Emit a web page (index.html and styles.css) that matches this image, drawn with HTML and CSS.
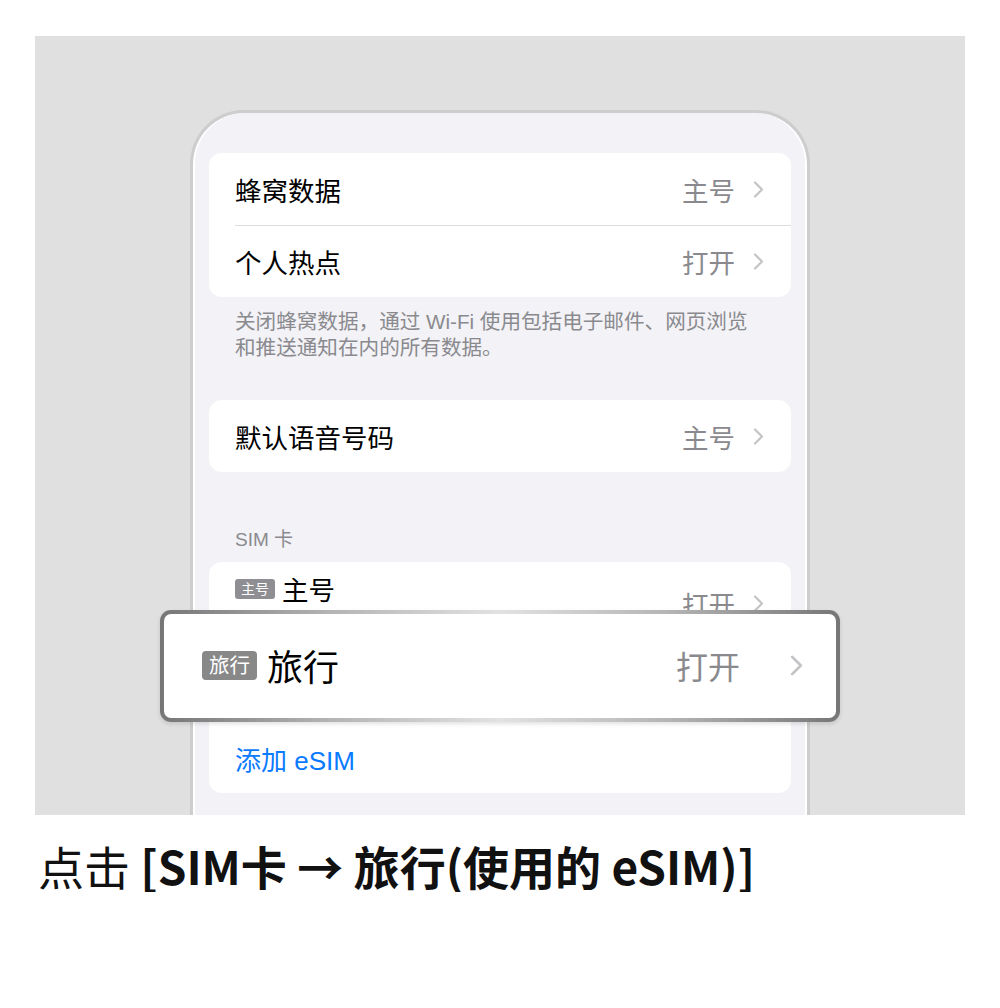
FILE: index.html
```html
<!DOCTYPE html>
<html lang="zh-CN">

<head>
  <meta charset="UTF-8">
  <meta name="viewport" content="width=device-width, initial-scale=1" />
  <title>SIM 卡设置</title>
  <link rel="stylesheet" href="styles.css">
</head>

<body>
  <div class="stage">
    <div class="phone">
      <div class="group">
        <div class="row">
          <span class="label">蜂窝数据</span>
          <span class="value">主号</span>
          <svg class="chevron" viewBox="0 0 10 17"><path d="M1.5 1.5l7 7-7 7" /></svg>
        </div>
        <div class="row">
          <span class="label">个人热点</span>
          <span class="value">打开</span>
          <svg class="chevron" viewBox="0 0 10 17"><path d="M1.5 1.5l7 7-7 7" /></svg>
        </div>
      </div>
      <p class="footnote">关闭蜂窝数据，通过 Wi-Fi 使用包括电子邮件、网页浏览<br>和推送通知在内的所有数据。</p>

      <div class="group group-voice">
        <div class="row">
          <span class="label">默认语音号码</span>
          <span class="value">主号</span>
          <svg class="chevron" viewBox="0 0 10 17"><path d="M1.5 1.5l7 7-7 7" /></svg>
        </div>
      </div>

      <h3 class="section-title">SIM 卡</h3>
      <div class="group">
        <div class="row row-sim">
          <span class="label"><span class="badge">主号</span>主号</span>
          <span class="value">打开</span>
          <svg class="chevron" viewBox="0 0 10 17"><path d="M1.5 1.5l7 7-7 7" /></svg>
        </div>
        <!-- the travel row sits under the callout, so only its box is kept -->
        <div class="row row-sim row-covered"></div>
        <div class="row row-add">
          <span class="link">添加 eSIM</span>
        </div>
      </div>
    </div>

    <!-- enlarged copy of the travel SIM row -->
    <div class="callout">
      <span class="badge">旅行</span>
      <span class="label">旅行</span>
      <span class="value">打开</span>
      <svg class="chevron" viewBox="0 0 10 17"><path d="M1.5 1.5l7 7-7 7" /></svg>
    </div>
  </div>

  <p class="caption">点击 <b>[SIM卡 → 旅行(使用的 eSIM)]</b></p>
</body>

</html>
```

FILE: styles.css
```css
:root {
  --color-text: #000;
  --color-muted: #8a8a8e;
  --color-chevron: #c4c4c7;
  --color-phone-bg: #f2f2f7;
  --color-stage: #e0e0e0;
  --color-link: #0a7aff;
  --font-ui: "Liberation Sans", "Noto Sans CJK SC", sans-serif;
}

* {
  margin: 0;
  padding: 0;
  box-sizing: border-box;
}

body {
  background-color: #fff;
  font-family: var(--font-ui);
  color: var(--color-text);
}

.stage {
  position: relative;
  margin: 36px 35px 0;
  height: 779px;
  padding-top: 74px;
  background-color: var(--color-stage);
  overflow: hidden;

  display: flex;
  justify-content: center;
}

.phone {
  width: 620px;
  height: 720px;
  padding: 40px 16px 0;
  background-color: var(--color-phone-bg);
  border: 3px solid #cdcdcd;
  border-bottom: none;
  border-radius: 54px 54px 0 0;
  box-shadow: inset 2px 0 0 #fff, inset -2px 0 0 #fff;
}

.group {
  background-color: #fff;
  border-radius: 13px;
  overflow: hidden;
}

.row {
  position: relative;
  height: 72px;
  padding: 0 27px 0 26px;

  display: flex;
  align-items: center;

  .label {
    flex: 1;
    font-size: 26.5px;
    display: flex;
    align-items: center;
  }

  .value {
    font-size: 26.5px;
    color: var(--color-muted);
    margin-right: 18px;
  }
}

.row + .row::before {
  content: "";
  position: absolute;
  top: 0;
  left: 26px;
  right: 0;
  border-top: 1px solid #dcdcdf;
}

.chevron {
  width: 11px;
  height: 17px;
  flex-shrink: 0;

  path {
    fill: none;
    stroke: var(--color-chevron);
    stroke-width: 2.2;
    stroke-linecap: round;
    stroke-linejoin: round;
  }
}

.badge {
  margin-right: 7px;
  padding: 0 6px;
  height: 20px;
  line-height: 20px;
  border-radius: 3px;
  background-color: #8e8e93;
  color: #fff;
  font-size: 14px;
}

.row-sim {
  height: 76px;
  padding-top: 7px;

  .label {
    align-self: flex-start;
  }
}

.row-add {
  height: 79px;
  padding-top: 10px;
}

.link {
  font-size: 26px;
  color: var(--color-link);
}

.footnote {
  margin-top: 12px;
  padding-left: 26px;
  font-size: 20.6px;
  line-height: 26px;
  color: var(--color-muted);
}

.group-voice {
  margin-top: 39px;
}

.section-title {
  margin: 56px 0 10px 26px;
  font-size: 19px;
  line-height: 24px;
  font-weight: normal;
  color: var(--color-muted);
}

.callout {
  position: absolute;
  left: 125px;
  top: 574px;
  width: 680px;
  height: 112px;
  padding: 0 33px 2px 38px;
  border: 4px solid transparent;
  border-radius: 11px;
  background:
    linear-gradient(#fff, #fff) padding-box,
    linear-gradient(90deg, #767676, #b4b4b4 25%, #e2e2e2 50%, #b4b4b4 75%, #767676) border-box;
  box-shadow: 0 2px 4px rgba(0, 0, 0, 0.12);

  display: flex;
  align-items: center;

  .badge {
    height: 29px;
    line-height: 29px;
    padding: 0 7px;
    margin-right: 10px;
    border-radius: 4px;
    background-color: #888;
    font-size: 20.5px;
  }

  .label {
    flex: 1;
    font-size: 36px;
  }

  .value {
    font-size: 32px;
    color: var(--color-muted);
    margin-right: 50px;
  }

  .chevron {
    width: 13px;
    height: 21px;
  }
}

.caption {
  margin: 23px 0 0 38px;
  font-family: "Noto Sans CJK SC", sans-serif;
  font-size: 46px;
  line-height: 54px;
  color: #111;

  b {
    font-weight: bold;
  }
}
```
